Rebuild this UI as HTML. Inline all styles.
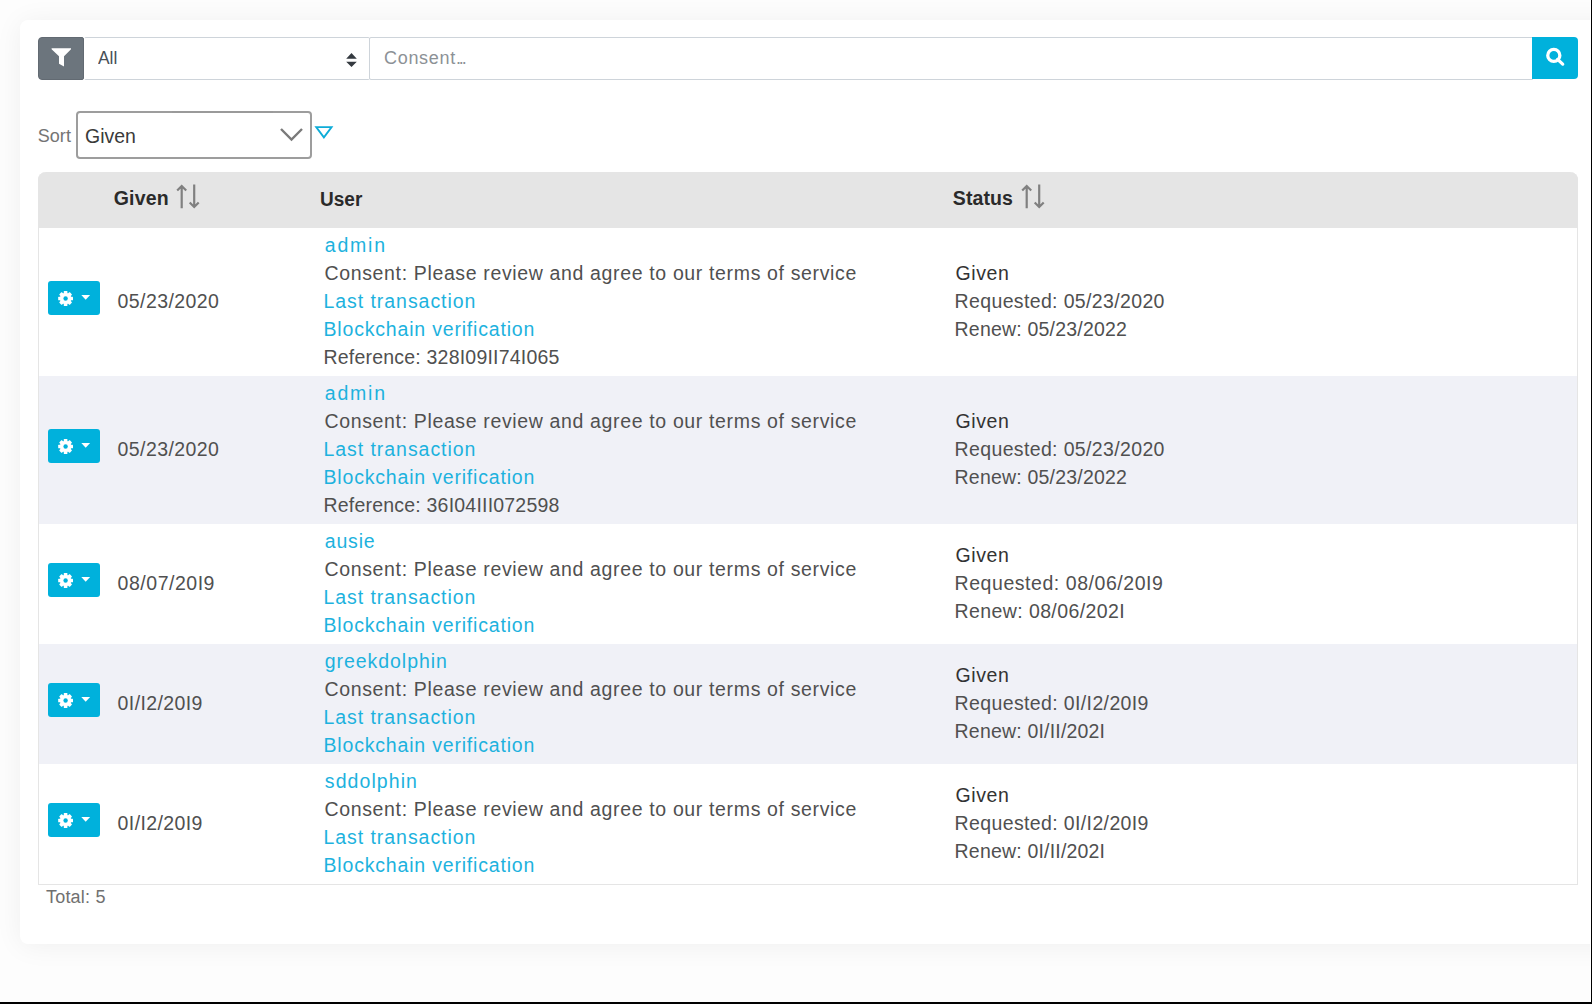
<!DOCTYPE html>
<html><head><meta charset="utf-8">
<style>
*{box-sizing:border-box;margin:0;padding:0}
html,body{width:1592px;height:1004px;overflow:hidden;background:#fdfdfd}
body{font-family:"Liberation Sans",sans-serif;position:relative}
.abs{position:absolute}
.card{position:absolute;left:20px;top:20px;width:1640px;height:924px;background:#fff;border-radius:8px;box-shadow:0 2px 28px rgba(0,0,0,.06)}
.t{position:absolute;white-space:nowrap;line-height:1}
.gbtn{position:absolute;left:48px;width:52px;height:34px;background:#00b1dc;border-radius:3px}
.gbtn svg{display:block}
</style></head><body>
<div class="card"></div>
<!-- toolbar -->
<div class="abs" style="left:38px;top:37px;width:46px;height:43px;background:#6c757d;border:1px solid #626a72;border-radius:4px 2px 2px 4px">
<svg style="position:absolute;left:-1px;top:-1px" width="46" height="43" viewBox="0 0 46 43"><path d="M13.6,11.2 H33 V12.3 L26,19.2 V29.4 L21,26.8 V19.2 L13.6,12.3 Z" fill="#fff"/></svg></div>
<div class="abs" style="left:84px;top:37px;width:286px;height:43px;border:1px solid #ced4da;border-left-color:#fff;border-radius:2px;background:#fff">
<svg class="abs" style="left:260px;top:14px" width="13" height="16" viewBox="0 0 13 16"><path d="M1.2,6.75 L6.5,0.9 L11.8,6.75 Z M1.2,9.8 L6.5,15.1 L11.8,9.8 Z" fill="#343a40"/></svg></div>
<div class="abs" style="left:369px;top:37px;width:1164px;height:43px;border:1px solid #ced4da;border-radius:2px 0 0 2px;background:#fff"></div>
<div class="abs" style="left:1532px;top:37px;width:46px;height:42px;background:#00b1dc;border-radius:0 4px 4px 0">
<svg width="46" height="42" viewBox="0 0 46 42"><circle cx="21.8" cy="18.4" r="6.05" fill="none" stroke="#fff" stroke-width="3.3"/><path d="M25.6,22.4 L30.7,27.1" stroke="#fff" stroke-width="3.3" stroke-linecap="round"/></svg></div>
<!-- sort -->
<div class="abs" style="left:76px;top:111px;width:236px;height:48px;border:2px solid #9d9d9d;border-radius:4px;background:#fff"></div>
<div class="abs" style="left:172px;top:111px;width:101px;height:2px;background:#9a9a9a"></div>
<svg class="abs" style="left:279px;top:126px" width="26" height="18" viewBox="0 0 26 18"><path d="M2,3 L12.5,13.5 L23,3" fill="none" stroke="#7a7a7a" stroke-width="2.4"/></svg>
<svg class="abs" style="left:314px;top:125px" width="20" height="16" viewBox="0 0 20 16"><path d="M2.2,2.1 H17.6 L9.9,12.4 Z" fill="none" stroke="#0eacd8" stroke-width="1.8" stroke-linejoin="miter"/></svg>
<!-- table -->
<div class="abs" style="left:38px;top:172px;width:1540px;height:713px;border:1px solid #e5e5e5;border-top:none;border-radius:8px 8px 0 0"></div>
<div class="abs" style="left:38px;top:172px;width:1540px;height:56px;background:#e5e5e5;border-radius:8px 8px 0 0"></div>
<div class="abs" style="left:39px;top:376px;width:1538px;height:148px;background:#f0f1f7"></div><div class="abs" style="left:39px;top:644px;width:1538px;height:120px;background:#f0f1f7"></div>
<svg class="abs" style="left:174px;top:182px" width="30" height="30" viewBox="0 0 30 30"><path d="M7.7,26.3 V4 M3.2,8.6 L7.7,4 L12.2,8.6 M20.2,2.5 V25 M15.7,20.4 L20.2,25 L24.7,20.4" fill="none" stroke="#808080" stroke-width="2.2"/></svg>
<svg class="abs" style="left:1019px;top:182px" width="30" height="30" viewBox="0 0 30 30"><path d="M7.7,26.3 V4 M3.2,8.6 L7.7,4 L12.2,8.6 M20.2,2.5 V25 M15.7,20.4 L20.2,25 L24.7,20.4" fill="none" stroke="#808080" stroke-width="2.2"/></svg>
<div class="gbtn" style="top:281.0px"><svg width="52" height="34" viewBox="0 0 52 34">
<g transform="translate(17.6,17.5)" fill="#fff"><circle r="5.7"/><rect x="-1.8" y="-7.4" width="3.6" height="14.8" rx="0.5"/><rect x="-1.8" y="-7.4" width="3.6" height="14.8" rx="0.5" transform="rotate(45)"/><rect x="-1.8" y="-7.4" width="3.6" height="14.8" rx="0.5" transform="rotate(90)"/><rect x="-1.8" y="-7.4" width="3.6" height="14.8" rx="0.5" transform="rotate(135)"/><circle r="2.2" fill="#00b1dc"/></g>
<path d="M33.3,13.9 h8.8 l-4.4,4.8 z" fill="#fff"/></svg></div>
<div class="gbtn" style="top:429.0px"><svg width="52" height="34" viewBox="0 0 52 34">
<g transform="translate(17.6,17.5)" fill="#fff"><circle r="5.7"/><rect x="-1.8" y="-7.4" width="3.6" height="14.8" rx="0.5"/><rect x="-1.8" y="-7.4" width="3.6" height="14.8" rx="0.5" transform="rotate(45)"/><rect x="-1.8" y="-7.4" width="3.6" height="14.8" rx="0.5" transform="rotate(90)"/><rect x="-1.8" y="-7.4" width="3.6" height="14.8" rx="0.5" transform="rotate(135)"/><circle r="2.2" fill="#00b1dc"/></g>
<path d="M33.3,13.9 h8.8 l-4.4,4.8 z" fill="#fff"/></svg></div>
<div class="gbtn" style="top:563.0px"><svg width="52" height="34" viewBox="0 0 52 34">
<g transform="translate(17.6,17.5)" fill="#fff"><circle r="5.7"/><rect x="-1.8" y="-7.4" width="3.6" height="14.8" rx="0.5"/><rect x="-1.8" y="-7.4" width="3.6" height="14.8" rx="0.5" transform="rotate(45)"/><rect x="-1.8" y="-7.4" width="3.6" height="14.8" rx="0.5" transform="rotate(90)"/><rect x="-1.8" y="-7.4" width="3.6" height="14.8" rx="0.5" transform="rotate(135)"/><circle r="2.2" fill="#00b1dc"/></g>
<path d="M33.3,13.9 h8.8 l-4.4,4.8 z" fill="#fff"/></svg></div>
<div class="gbtn" style="top:683.0px"><svg width="52" height="34" viewBox="0 0 52 34">
<g transform="translate(17.6,17.5)" fill="#fff"><circle r="5.7"/><rect x="-1.8" y="-7.4" width="3.6" height="14.8" rx="0.5"/><rect x="-1.8" y="-7.4" width="3.6" height="14.8" rx="0.5" transform="rotate(45)"/><rect x="-1.8" y="-7.4" width="3.6" height="14.8" rx="0.5" transform="rotate(90)"/><rect x="-1.8" y="-7.4" width="3.6" height="14.8" rx="0.5" transform="rotate(135)"/><circle r="2.2" fill="#00b1dc"/></g>
<path d="M33.3,13.9 h8.8 l-4.4,4.8 z" fill="#fff"/></svg></div>
<div class="gbtn" style="top:803.0px"><svg width="52" height="34" viewBox="0 0 52 34">
<g transform="translate(17.6,17.5)" fill="#fff"><circle r="5.7"/><rect x="-1.8" y="-7.4" width="3.6" height="14.8" rx="0.5"/><rect x="-1.8" y="-7.4" width="3.6" height="14.8" rx="0.5" transform="rotate(45)"/><rect x="-1.8" y="-7.4" width="3.6" height="14.8" rx="0.5" transform="rotate(90)"/><rect x="-1.8" y="-7.4" width="3.6" height="14.8" rx="0.5" transform="rotate(135)"/><circle r="2.2" fill="#00b1dc"/></g>
<path d="M33.3,13.9 h8.8 l-4.4,4.8 z" fill="#fff"/></svg></div>

<div class=t style="left:98.00px;top:49.16px;font-size:18px;font-weight:400;color:#495057;transform:scaleX(0.9682);transform-origin:0.00px 0">All</div>
<div class=t style="left:37.70px;top:127.46px;font-size:18px;font-weight:400;color:#747474;letter-spacing:0.063px">Sort</div>
<div class=t style="left:85.40px;top:125.77px;font-size:20px;font-weight:400;color:#3a3a3a;transform:scaleX(0.9736);transform-origin:1.00px 0">Given</div>
<div class=t style="left:113.70px;top:188.69px;font-size:19.5px;font-weight:700;color:#2a2a2a;letter-spacing:0.181px">Given</div>
<div class=t style="left:319.70px;top:189.79px;font-size:19.5px;font-weight:700;color:#2a2a2a;transform:scaleX(0.9749);transform-origin:1.00px 0">User</div>
<div class=t style="left:952.80px;top:188.69px;font-size:19.5px;font-weight:700;color:#2a2a2a;letter-spacing:0.090px">Status</div>
<div class=t style="left:324.80px;top:236.49px;font-size:19.5px;font-weight:400;color:#1db2de;letter-spacing:1.784px">admin</div>
<div class=t style="left:324.50px;top:264.49px;font-size:19.5px;font-weight:400;color:#505050;letter-spacing:0.644px">Consent: Please review and agree to our terms of service</div>
<div class=t style="left:323.50px;top:292.49px;font-size:19.5px;font-weight:400;color:#1db2de;letter-spacing:0.946px">Last transaction</div>
<div class=t style="left:323.50px;top:320.49px;font-size:19.5px;font-weight:400;color:#1db2de;letter-spacing:0.815px">Blockchain verification</div>
<div class=t style="left:323.50px;top:348.49px;font-size:19.5px;font-weight:400;color:#505050;letter-spacing:0.205px">Reference: 328I09II74I065</div>
<div class=t style="left:955.60px;top:264.49px;font-size:19.5px;font-weight:400;color:#333333;letter-spacing:0.576px">Given</div>
<div class=t style="left:954.60px;top:292.49px;font-size:19.5px;font-weight:400;color:#505050;letter-spacing:0.355px">Requested: 05/23/2020</div>
<div class=t style="left:954.60px;top:320.49px;font-size:19.5px;font-weight:400;color:#505050;letter-spacing:0.195px">Renew: 05/23/2022</div>
<div class=t style="left:117.60px;top:292.49px;font-size:19.5px;font-weight:400;color:#505050;letter-spacing:0.406px">05/23/2020</div>
<div class=t style="left:324.80px;top:384.49px;font-size:19.5px;font-weight:400;color:#1db2de;letter-spacing:1.784px">admin</div>
<div class=t style="left:324.50px;top:412.49px;font-size:19.5px;font-weight:400;color:#505050;letter-spacing:0.644px">Consent: Please review and agree to our terms of service</div>
<div class=t style="left:323.50px;top:440.49px;font-size:19.5px;font-weight:400;color:#1db2de;letter-spacing:0.946px">Last transaction</div>
<div class=t style="left:323.50px;top:468.49px;font-size:19.5px;font-weight:400;color:#1db2de;letter-spacing:0.815px">Blockchain verification</div>
<div class=t style="left:323.50px;top:496.49px;font-size:19.5px;font-weight:400;color:#505050;letter-spacing:0.205px">Reference: 36I04III072598</div>
<div class=t style="left:955.60px;top:412.49px;font-size:19.5px;font-weight:400;color:#333333;letter-spacing:0.576px">Given</div>
<div class=t style="left:954.60px;top:440.49px;font-size:19.5px;font-weight:400;color:#505050;letter-spacing:0.355px">Requested: 05/23/2020</div>
<div class=t style="left:954.60px;top:468.49px;font-size:19.5px;font-weight:400;color:#505050;letter-spacing:0.195px">Renew: 05/23/2022</div>
<div class=t style="left:117.60px;top:440.49px;font-size:19.5px;font-weight:400;color:#505050;letter-spacing:0.406px">05/23/2020</div>
<div class=t style="left:324.80px;top:532.49px;font-size:19.5px;font-weight:400;color:#1db2de;letter-spacing:0.807px">ausie</div>
<div class=t style="left:324.50px;top:560.49px;font-size:19.5px;font-weight:400;color:#505050;letter-spacing:0.644px">Consent: Please review and agree to our terms of service</div>
<div class=t style="left:323.50px;top:588.49px;font-size:19.5px;font-weight:400;color:#1db2de;letter-spacing:0.946px">Last transaction</div>
<div class=t style="left:323.50px;top:616.49px;font-size:19.5px;font-weight:400;color:#1db2de;letter-spacing:0.815px">Blockchain verification</div>
<div class=t style="left:955.60px;top:546.49px;font-size:19.5px;font-weight:400;color:#333333;letter-spacing:0.576px">Given</div>
<div class=t style="left:954.60px;top:574.49px;font-size:19.5px;font-weight:400;color:#505050;letter-spacing:0.551px">Requested: 08/06/20I9</div>
<div class=t style="left:954.60px;top:602.49px;font-size:19.5px;font-weight:400;color:#505050;letter-spacing:0.395px">Renew: 08/06/202I</div>
<div class=t style="left:117.60px;top:574.49px;font-size:19.5px;font-weight:400;color:#505050;letter-spacing:0.520px">08/07/20I9</div>
<div class=t style="left:324.80px;top:652.49px;font-size:19.5px;font-weight:400;color:#1db2de;letter-spacing:0.943px">greekdolphin</div>
<div class=t style="left:324.50px;top:680.49px;font-size:19.5px;font-weight:400;color:#505050;letter-spacing:0.644px">Consent: Please review and agree to our terms of service</div>
<div class=t style="left:323.50px;top:708.49px;font-size:19.5px;font-weight:400;color:#1db2de;letter-spacing:0.946px">Last transaction</div>
<div class=t style="left:323.50px;top:736.49px;font-size:19.5px;font-weight:400;color:#1db2de;letter-spacing:0.815px">Blockchain verification</div>
<div class=t style="left:955.60px;top:666.49px;font-size:19.5px;font-weight:400;color:#333333;letter-spacing:0.576px">Given</div>
<div class=t style="left:954.60px;top:694.49px;font-size:19.5px;font-weight:400;color:#505050;letter-spacing:0.369px">Requested: 0I/I2/20I9</div>
<div class=t style="left:954.60px;top:722.49px;font-size:19.5px;font-weight:400;color:#505050;letter-spacing:0.187px">Renew: 0I/II/202I</div>
<div class=t style="left:117.60px;top:694.49px;font-size:19.5px;font-weight:400;color:#505050;letter-spacing:0.392px">0I/I2/20I9</div>
<div class=t style="left:324.80px;top:772.49px;font-size:19.5px;font-weight:400;color:#1db2de;letter-spacing:1.083px">sddolphin</div>
<div class=t style="left:324.50px;top:800.49px;font-size:19.5px;font-weight:400;color:#505050;letter-spacing:0.644px">Consent: Please review and agree to our terms of service</div>
<div class=t style="left:323.50px;top:828.49px;font-size:19.5px;font-weight:400;color:#1db2de;letter-spacing:0.946px">Last transaction</div>
<div class=t style="left:323.50px;top:856.49px;font-size:19.5px;font-weight:400;color:#1db2de;letter-spacing:0.815px">Blockchain verification</div>
<div class=t style="left:955.60px;top:786.49px;font-size:19.5px;font-weight:400;color:#333333;letter-spacing:0.576px">Given</div>
<div class=t style="left:954.60px;top:814.49px;font-size:19.5px;font-weight:400;color:#505050;letter-spacing:0.369px">Requested: 0I/I2/20I9</div>
<div class=t style="left:954.60px;top:842.49px;font-size:19.5px;font-weight:400;color:#505050;letter-spacing:0.187px">Renew: 0I/II/202I</div>
<div class=t style="left:117.60px;top:814.49px;font-size:19.5px;font-weight:400;color:#505050;letter-spacing:0.392px">0I/I2/20I9</div>
<div class=t style="left:46.00px;top:887.76px;font-size:18px;font-weight:400;color:#707070;letter-spacing:0.197px">Total: 5</div>
<div class=t style="left:384px;top:49.26px;font-size:18px;color:#8c9196;letter-spacing:0.7px">Consent<span style="letter-spacing:-2.1px">...</span></div>
<div class="abs" style="left:1590px;top:0;width:1px;height:1004px;background:#fff"></div>
<div class="abs" style="left:1591px;top:0;width:1px;height:1004px;background:#000"></div>
<div class="abs" style="left:0;top:1002px;width:1592px;height:2px;background:#000"></div>
</body></html>
